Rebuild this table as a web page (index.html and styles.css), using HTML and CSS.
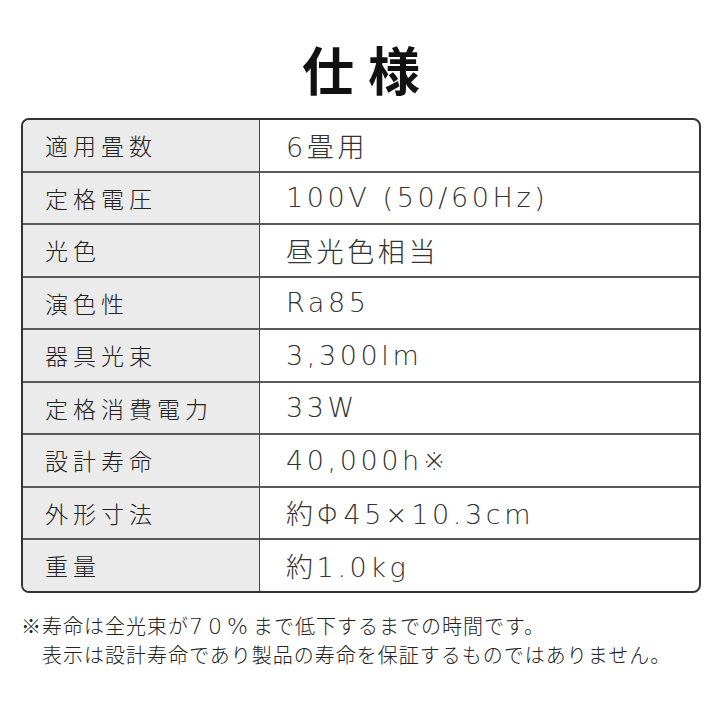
FILE: index.html
```html
<!DOCTYPE html>
<html lang="ja">
<head>
<meta charset="utf-8">
<link rel="stylesheet" href="styles.css">
</head>
<body>
<div class="page">
  <h1 class="title">仕様</h1>
  <table class="spec">
    <tr><th>適用畳数</th><td>6畳用</td></tr>
    <tr><th>定格電圧</th><td>100V (50/60Hz)</td></tr>
    <tr><th>光色</th><td>昼光色相当</td></tr>
    <tr><th>演色性</th><td>Ra85</td></tr>
    <tr><th>器具光束</th><td>3,300lm</td></tr>
    <tr><th>定格消費電力</th><td>33W</td></tr>
    <tr><th>設計寿命</th><td>40,000h※</td></tr>
    <tr><th>外形寸法</th><td>約Φ45×10.3cm</td></tr>
    <tr><th>重量</th><td>約1.0kg</td></tr>
  </table>
  <div class="notes">
    <p class="note">※寿命は全光束が<span class="num">70%</span>まで低下するまでの時間です。</p>
    <p class="note cont">表示は設計寿命であり製品の寿命を保証するものではありません。</p>
  </div>
</div>
</body>
</html>
```

FILE: styles.css
```css
html, body {
  margin: 0;
  padding: 0;
  background: #ffffff;
}
body {
  font-family: "Noto Sans CJK JP", "Noto Sans", sans-serif;
  color: #222;
}
.page {
  width: 720px;
  height: 720px;
  padding: 0 19px 0 21px;
  box-sizing: border-box;
  display: flex;
  flex-direction: column;
}
.title {
  margin: 39px 0 0 0;
  height: 79px;
  line-height: 60px;
  font-size: 52px;
  font-weight: 700;
  letter-spacing: 14px;
  text-indent: 14px;
  text-align: center;
  color: #111;
}
.spec {
  width: 680px;
  border-collapse: separate;
  border-spacing: 0;
  border: 2px solid #333;
  border-radius: 8px;
  overflow: hidden;
}
.spec th, .spec td {
  height: 50.5px;
  padding: 0;
  text-align: left;
  border-bottom: 2px solid #5a5a5a;
  vertical-align: middle;
}
.spec tr:last-child th, .spec tr:last-child td {
  border-bottom: none;
}
.spec th {
  width: 214px;
  background: #ebebeb;
  border-right: 1.5px solid #444;
  padding-left: 22px;
  font-size: 23px;
  font-weight: 300;
  letter-spacing: 5px;
  color: #222;
}
.spec td {
  padding-left: 26px;
  font-family: "DejaVu Sans", "Noto Sans CJK JP", sans-serif;
  font-weight: 200;
  font-size: 27px;
  letter-spacing: 3.6px;
  color: #333;
}
.notes {
  margin-top: 19px;
}
.note {
  margin: 0;
  font-size: 20px;
  line-height: 28px;
  font-weight: 300;
  letter-spacing: 1px;
  color: #222;
}
.note .num {
  font-family: "DejaVu Sans", sans-serif;
  font-weight: 200;
  font-size: 22px;
  letter-spacing: 5px;
}
.note.cont {
  padding-left: 21px;
}
```
